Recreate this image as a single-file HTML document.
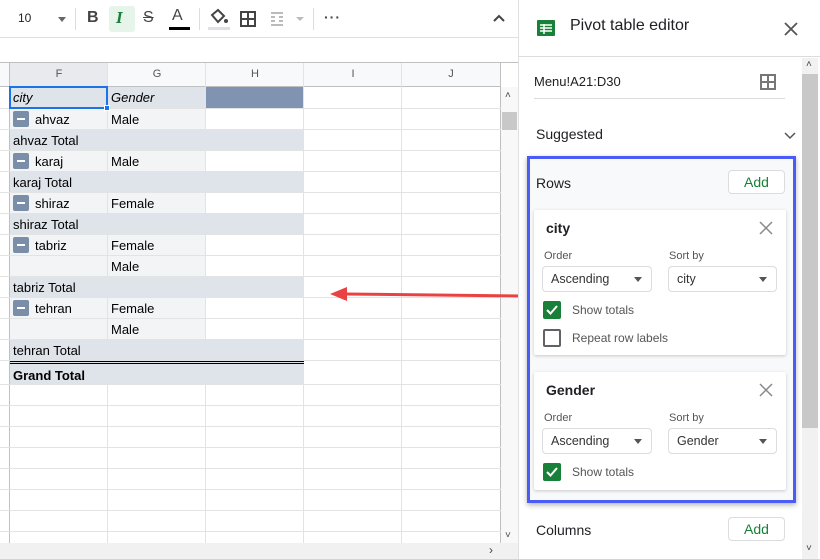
<!DOCTYPE html><html><head><style>
*{box-sizing:border-box;margin:0;padding:0}
body{width:820px;height:559px;overflow:hidden;background:#fff;font-family:"Liberation Sans",Arial,sans-serif;position:relative;font-size:13px;color:#222}
.a{position:absolute}
.vl{position:absolute;width:1px;background:#e2e3e3}
.hl{position:absolute;height:1px;background:#e2e3e3}
.cell{position:absolute;height:21px;line-height:23px;padding-left:3px;font-size:13px;color:#000}
.min{display:inline-block;width:16px;height:16px;background:#7b8ea9;border-radius:2px;vertical-align:-3px;margin-right:6px;position:relative}
.min:after{content:"";position:absolute;left:4px;top:7px;width:8px;height:2px;background:#fff}
.card{position:absolute;background:#fff;box-shadow:0 1px 3px rgba(0,0,0,.2);border-radius:2px}
.sel{position:absolute;height:26px;border:1px solid #dadce0;border-radius:4px;font-size:12.5px;line-height:24px;padding-left:8px;color:#333}
.sel:after{content:"";position:absolute;right:9px;top:10px;border:4.5px solid transparent;border-top:5px solid #555}
.lbl{position:absolute;font-size:11px;color:#555}
.cb{position:absolute;width:18px;height:18px;border-radius:2px}
.btn{position:absolute;width:57px;height:24px;border:1px solid #dadce0;border-radius:4px;color:#188038;font-size:14px;text-align:center;line-height:22px}
</style></head><body>
<div class="a" style="left:0;top:0;width:518px;height:38px;border-bottom:1px solid #e0e0e0"></div>
<div class="a" style="left:18px;top:11px;font-size:12px">10</div>
<div class="a" style="left:58px;top:17px;border:4px solid transparent;border-top:5px solid #666"></div>
<div class="a" style="left:75px;top:8px;width:1px;height:22px;background:#ddd"></div>
<div class="a" style="left:87px;top:9px;font-weight:bold;font-size:16px;color:#444">B</div>
<div class="a" style="left:109px;top:6px;width:26px;height:26px;background:#e6f4ea;border-radius:3px"></div>
<div class="a" style="left:116px;top:8px;font-style:italic;font-weight:bold;font-size:17px;color:#188038;font-family:'Liberation Serif',serif">I</div>
<div class="a" style="left:143px;top:9px;font-size:16px;color:#444;text-decoration:line-through">S</div>
<div class="a" style="left:172px;top:7px;font-size:16px;color:#444">A</div>
<div class="a" style="left:169px;top:27px;width:21px;height:3px;background:#000"></div>
<div class="a" style="left:199px;top:8px;width:1px;height:22px;background:#ddd"></div>
<svg class="a" style="left:207px;top:8px" width="24" height="24"><path d="M5 7l6-5 6 6-6 6z" fill="none" stroke="#444" stroke-width="2"/><circle cx="19" cy="13" r="2" fill="#444"/><rect x="1" y="19" width="22" height="3" fill="#dde1e6"/></svg>
<svg class="a" style="left:240px;top:11px" width="16" height="16"><rect x="1" y="1" width="14" height="14" fill="none" stroke="#444" stroke-width="2"/><path d="M8 1v14M1 8h14" stroke="#444" stroke-width="2"/></svg>
<svg class="a" style="left:270px;top:12px" width="36" height="14"><path d="M1 1h12M1 13h12M1 5h4M9 5h4M1 9h4M9 9h4" stroke="#bbb" stroke-width="2"/><path d="M26 5l4 4 4-4z" fill="#bbb"/></svg>
<div class="a" style="left:313px;top:8px;width:1px;height:22px;background:#ddd"></div>
<div class="a" style="left:324px;top:9px;font-size:14px;color:#444;letter-spacing:1px;font-weight:bold">···</div>
<svg class="a" style="left:492px;top:13px" width="14" height="10"><path d="M2 8l5-5 5 5" fill="none" stroke="#444" stroke-width="2"/></svg>
<div class="a" style="left:0;top:38px;width:518px;height:25px;border-bottom:1px solid #c0c0c0"></div>
<div class="a" style="left:0;top:63px;width:501px;height:24px;background:#f8f9fa;border-bottom:1px solid #c0c0c0"></div>
<div class="a" style="left:10px;top:63px;width:98px;height:24px;background:#e8eaed"></div>
<div class="a" style="left:10px;top:68px;width:98px;text-align:center;font-size:11px;color:#555">F</div>
<div class="a" style="left:108px;top:68px;width:98px;text-align:center;font-size:11px;color:#555">G</div>
<div class="a" style="left:206px;top:68px;width:98px;text-align:center;font-size:11px;color:#555">H</div>
<div class="a" style="left:304px;top:68px;width:98px;text-align:center;font-size:11px;color:#555">I</div>
<div class="a" style="left:402px;top:68px;width:98px;text-align:center;font-size:11px;color:#555">J</div>
<div class="a" style="left:10px;top:87px;width:196px;height:21px;background:#dfe3ea"></div>
<div class="a" style="left:206px;top:87px;width:98px;height:21px;background:#8093b1"></div>
<div class="a" style="left:10px;top:108px;width:196px;height:21px;background:#f3f4f6"></div>
<div class="a" style="left:10px;top:129px;width:294px;height:21px;background:#dfe3ea"></div>
<div class="a" style="left:10px;top:150px;width:196px;height:21px;background:#f3f4f6"></div>
<div class="a" style="left:10px;top:171px;width:294px;height:21px;background:#dfe3ea"></div>
<div class="a" style="left:10px;top:192px;width:196px;height:21px;background:#f3f4f6"></div>
<div class="a" style="left:10px;top:213px;width:294px;height:21px;background:#dfe3ea"></div>
<div class="a" style="left:10px;top:234px;width:196px;height:42px;background:#f3f4f6"></div>
<div class="a" style="left:10px;top:276px;width:294px;height:21px;background:#dfe3ea"></div>
<div class="a" style="left:10px;top:297px;width:196px;height:42px;background:#f3f4f6"></div>
<div class="a" style="left:10px;top:339px;width:294px;height:46px;background:#dfe3ea"></div>
<div class="vl" style="left:9px;top:63px;height:480px;background:#c0c0c0"></div>
<div class="vl" style="left:107px;top:63px;height:480px"></div>
<div class="vl" style="left:205px;top:63px;height:480px"></div>
<div class="vl" style="left:303px;top:63px;height:480px"></div>
<div class="vl" style="left:401px;top:63px;height:480px"></div>
<div class="vl" style="left:500px;top:63px;height:480px;background:#c0c0c0"></div>
<div class="hl" style="left:0;top:108px;width:501px"></div>
<div class="hl" style="left:0;top:129px;width:501px"></div>
<div class="hl" style="left:0;top:150px;width:501px"></div>
<div class="hl" style="left:0;top:171px;width:501px"></div>
<div class="hl" style="left:0;top:192px;width:501px"></div>
<div class="hl" style="left:0;top:213px;width:501px"></div>
<div class="hl" style="left:0;top:234px;width:501px"></div>
<div class="hl" style="left:0;top:255px;width:501px"></div>
<div class="hl" style="left:0;top:276px;width:501px"></div>
<div class="hl" style="left:0;top:297px;width:501px"></div>
<div class="hl" style="left:0;top:318px;width:501px"></div>
<div class="hl" style="left:0;top:339px;width:501px"></div>
<div class="hl" style="left:0;top:360px;width:501px"></div>
<div class="hl" style="left:0;top:384px;width:501px"></div>
<div class="hl" style="left:0;top:405px;width:501px"></div>
<div class="hl" style="left:0;top:426px;width:501px"></div>
<div class="hl" style="left:0;top:447px;width:501px"></div>
<div class="hl" style="left:0;top:468px;width:501px"></div>
<div class="hl" style="left:0;top:489px;width:501px"></div>
<div class="hl" style="left:0;top:510px;width:501px"></div>
<div class="hl" style="left:0;top:531px;width:501px"></div>
<div class="a" style="left:10px;top:361px;width:294px;height:3px;border-top:1px solid #000;border-bottom:1px solid #000"></div>
<div class="a" style="left:9px;top:86px;width:99px;height:23px;border:2px solid #1a73e8"></div>
<div class="a" style="left:104px;top:105px;width:6px;height:6px;background:#1a73e8;border:1px solid #fff"></div>
<div class="cell" style="left:10px;top:86px;font-style:italic">city</div>
<div class="cell" style="left:108px;top:86px;font-style:italic">Gender</div>
<div class="cell" style="left:10px;top:108px"><span class="min"></span>ahvaz</div><div class="cell" style="left:108px;top:108px">Male</div>
<div class="cell" style="left:10px;top:129px">ahvaz Total</div>
<div class="cell" style="left:10px;top:150px"><span class="min"></span>karaj</div><div class="cell" style="left:108px;top:150px">Male</div>
<div class="cell" style="left:10px;top:171px">karaj Total</div>
<div class="cell" style="left:10px;top:192px"><span class="min"></span>shiraz</div><div class="cell" style="left:108px;top:192px">Female</div>
<div class="cell" style="left:10px;top:213px">shiraz Total</div>
<div class="cell" style="left:10px;top:234px"><span class="min"></span>tabriz</div><div class="cell" style="left:108px;top:234px">Female</div>
<div class="cell" style="left:108px;top:255px">Male</div>
<div class="cell" style="left:10px;top:276px">tabriz Total</div>
<div class="cell" style="left:10px;top:297px"><span class="min"></span>tehran</div><div class="cell" style="left:108px;top:297px">Female</div>
<div class="cell" style="left:108px;top:318px">Male</div>
<div class="cell" style="left:10px;top:339px">tehran Total</div>
<div class="cell" style="left:10px;top:364px;font-weight:bold">Grand Total</div>
<div class="a" style="left:501px;top:87px;width:17px;height:456px;background:#f8f8f8"></div>
<div class="a" style="left:502px;top:112px;width:15px;height:18px;background:#c8c8c8"></div>
<div class="a" style="left:505px;top:90px;font-size:10px;color:#444">˄</div>
<div class="a" style="left:505px;top:530px;font-size:10px;color:#444">˅</div>
<div class="a" style="left:0;top:543px;width:518px;height:16px;background:#f1f1f1"></div>
<div class="a" style="left:489px;top:543px;font-size:12px;color:#444">›</div>
<svg class="a" style="left:325px;top:283px" width="200" height="22"><path d="M20 11L198 13" stroke="#ea4242" stroke-width="3"/><path d="M5 11l17-7v14z" fill="#ea4242"/></svg>
<div class="a" style="left:518px;top:0;width:302px;height:559px;background:#fff;border-left:1px solid #e0e0e0"></div>
<div class="a" style="left:518px;top:56px;width:302px;height:1px;background:#dadce0"></div>
<svg class="a" style="left:537px;top:20px" width="18" height="16"><rect width="18" height="16" rx="1" fill="#188038"/><path d="M3 5h12M3 8h12M3 11h12M7 4v10" stroke="#fff" stroke-width="1.5"/></svg>
<div class="a" style="left:570px;top:17px;font-size:16px;color:#202124">Pivot table editor</div>
<svg class="a" style="left:784px;top:22px" width="14" height="14"><path d="M1 1l12 12M13 1L1 13" stroke="#555" stroke-width="1.8"/></svg>
<div class="a" style="left:802px;top:58px;width:16px;height:501px;background:#f1f1f1"></div>
<div class="a" style="left:802px;top:74px;width:16px;height:354px;background:#c8c8c8"></div>
<div class="a" style="left:806px;top:59px;font-size:10px;color:#444">˄</div>
<div class="a" style="left:806px;top:543px;font-size:10px;color:#444">˅</div>
<div class="a" style="left:534px;top:74px;font-size:13px;color:#202124">Menu!A21:D30</div>
<svg class="a" style="left:760px;top:74px" width="16" height="16"><rect x="1" y="1" width="14" height="14" fill="none" stroke="#777" stroke-width="2"/><path d="M8 1v14M1 8h14" stroke="#777" stroke-width="2"/></svg>
<div class="a" style="left:534px;top:98px;width:251px;height:1px;background:#dadce0"></div>
<div class="a" style="left:536px;top:126px;font-size:14px;color:#202124">Suggested</div>
<svg class="a" style="left:784px;top:132px" width="12" height="8"><path d="M1 1l5 5 5-5" fill="none" stroke="#555" stroke-width="1.5"/></svg>
<div class="a" style="left:527px;top:156px;width:269px;height:347px;border:3px solid #4a5cf5;box-shadow:0 2px 5px rgba(0,0,0,.3);background:#f8f9fa"></div>
<div class="a" style="left:536px;top:175px;font-size:14px;color:#202124">Rows</div>
<div class="btn" style="left:728px;top:170px;background:#fff">Add</div>
<div class="card" style="left:534px;top:210px;width:252px;height:145px"></div>
<div class="a" style="left:546px;top:220px;font-size:14px;font-weight:bold;color:#202124">city</div>
<svg class="a" style="left:759px;top:221px" width="14" height="14"><path d="M1 1l12 12M13 1L1 13" stroke="#888" stroke-width="1.5"/></svg>
<div class="lbl" style="left:544px;top:250px">Order</div><div class="lbl" style="left:669px;top:250px">Sort by</div>
<div class="sel" style="left:542px;top:266px;width:110px">Ascending</div>
<div class="sel" style="left:668px;top:266px;width:109px">city</div>
<div class="cb" style="left:543px;top:301px;background:#188038"><svg width="18" height="18"><path d="M4 9l3.5 3.5L14 5" fill="none" stroke="#fff" stroke-width="2"/></svg></div>
<div class="a" style="left:572px;top:303px;font-size:12px;color:#555">Show totals</div>
<div class="cb" style="left:543px;top:329px;border:2px solid #5f6368"></div>
<div class="a" style="left:572px;top:331px;font-size:12px;color:#555">Repeat row labels</div>
<div class="card" style="left:534px;top:372px;width:252px;height:118px"></div>
<div class="a" style="left:546px;top:382px;font-size:14px;font-weight:bold;color:#202124">Gender</div>
<svg class="a" style="left:759px;top:383px" width="14" height="14"><path d="M1 1l12 12M13 1L1 13" stroke="#888" stroke-width="1.5"/></svg>
<div class="lbl" style="left:544px;top:412px">Order</div><div class="lbl" style="left:669px;top:412px">Sort by</div>
<div class="sel" style="left:542px;top:428px;width:110px">Ascending</div>
<div class="sel" style="left:668px;top:428px;width:109px">Gender</div>
<div class="cb" style="left:543px;top:463px;background:#188038"><svg width="18" height="18"><path d="M4 9l3.5 3.5L14 5" fill="none" stroke="#fff" stroke-width="2"/></svg></div>
<div class="a" style="left:572px;top:465px;font-size:12px;color:#555">Show totals</div>
<div class="a" style="left:536px;top:522px;font-size:14px;color:#202124">Columns</div>
<div class="btn" style="left:728px;top:517px">Add</div>
</body></html>
